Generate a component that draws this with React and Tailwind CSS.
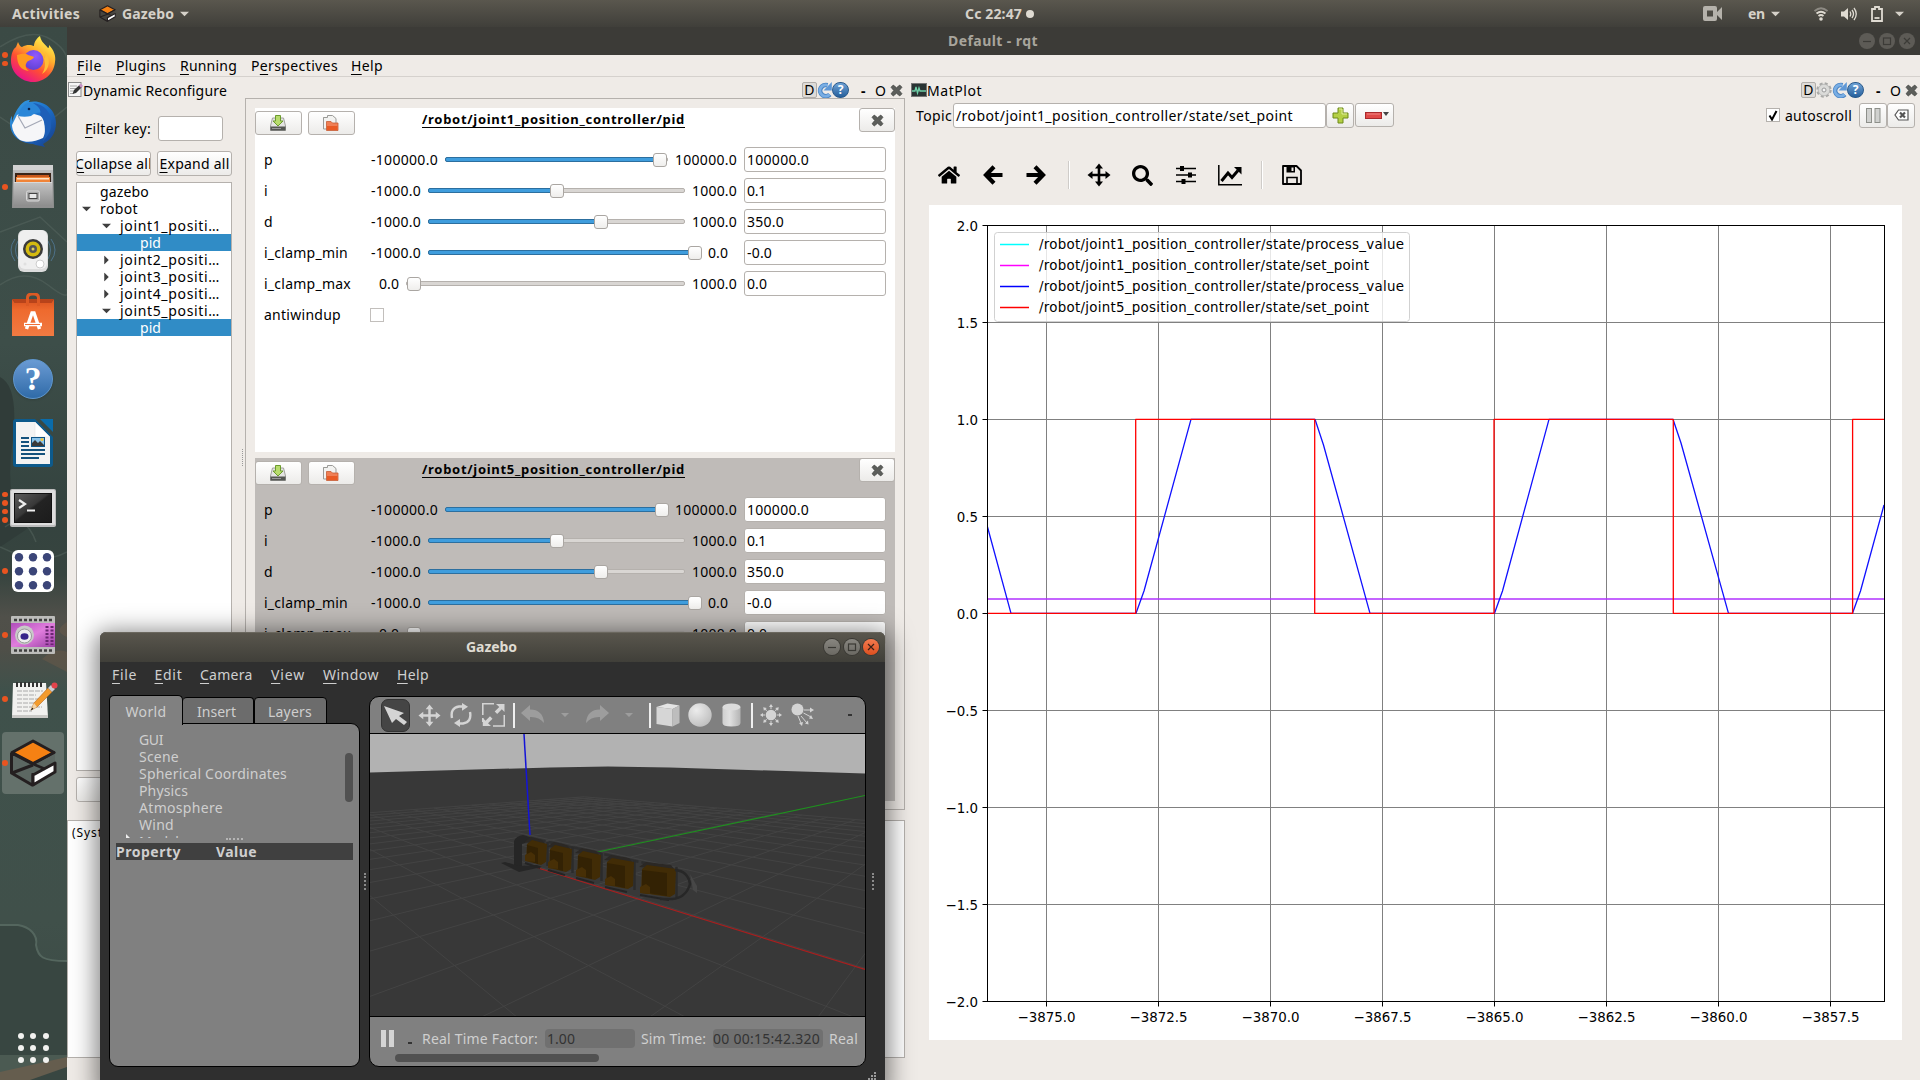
import React, { useLayoutEffect, useRef } from "react";
import { FaHome, FaSearch } from "react-icons/fa";

/* Text run tracked so that it fills a known width */
function T({ w, className = "", children }) {
  const ref = useRef(null);
  useLayoutEffect(() => {
    const el = ref.current;
    if (!w) return;
    el.style.letterSpacing = "0px";
    const natural = el.getBoundingClientRect().width;
    el.style.letterSpacing = (w - natural) / el.textContent.length + "px";
  }, [w]);
  return (
    <span ref={ref} className={"inline-block shrink-0 whitespace-pre " + className}>
      {children}
    </span>
  );
}

const U = ({ children }) => <span className="underline underline-offset-[3px] decoration-1">{children}</span>;

/* ---------- dock icons ---------- */
const Firefox = () => (
  <svg width="46" height="48" viewBox="0 0 46 48">
    <defs>
      <linearGradient id="ffA" x1="0.8" y1="0.05" x2="0.25" y2="0.95">
        <stop offset="0" stopColor="#fff44f" /><stop offset="0.35" stopColor="#ffb02e" /><stop offset="0.65" stopColor="#ff4f32" /><stop offset="1" stopColor="#e9128b" />
      </linearGradient>
      <radialGradient id="ffB" cx="0.6" cy="0.3" r="0.8">
        <stop offset="0" stopColor="#9059ff" /><stop offset="1" stopColor="#5b3fd0" />
      </radialGradient>
    </defs>
    <path d="M1 26C1 19 3 14 6 12l2-5c1 3 3 5 4 5 5-3 9-2 12-1 0-4 3-8 6-10 1 6 5 8 8 12 1 0 1-1 1-3 5 5 7 11 6 17-1 12-11 20-22 20S1 38 1 26z" fill="url(#ffA)" />
    <circle cx="23.500" cy="25" r="10" fill="url(#ffB)" />
    <path d="M7 20c5-1 8-2 11 0 2 1 5 1 6 2-1 3-5 3-7 5-2 3-2 6 2 9-8-1-12-6-12-16z" fill="#ff9a1f" />
    <path d="M25 12c5 1 9 6 9 12 2-2 2-5 1-8 6 8 5 18-3 23 6-9 3-20-7-27z" fill="#ffbd35" />
  </svg>
);
const Thunderbird = () => (
  <svg width="48" height="48" viewBox="0 0 48 48">
    <defs><linearGradient id="tb" x1="0" y1="0" x2="1" y2="1"><stop offset="0" stopColor="#3ba4e8" /><stop offset="0.5" stopColor="#1c6fc9" /><stop offset="1" stopColor="#163a86" /></linearGradient></defs>
    <path d="M10 8C14 2 18 1 21 1c0 0-1 1-1 2 14-3 27 7 27 21 0 10-5 17-13 21l2 3c-6-2-8-1-12-3C10 44 1 36 1 24c0-4 1-6 2-7l0 6c2-7 4-11 7-15z" fill="url(#tb)" />
    <path d="M3 26l5-10c8-4 19-1 26 2 2 9 3 16 0 21-8 4-17 5-23 2-4-3-8-9-8-15z" fill="#f6f6f8" />
    <path d="M9 17l7 12 17-8" stroke="#a4a8b6" strokeWidth="1.200" fill="none" />
    <path d="M9 17C12 6 19 2 24 4c8 1 12 7 12 11-5-3-10-1-14 2-4 1-9 1-13 0z" fill="#2a86d8" />
    <path d="M24 4c11 1 20 10 18 23 0 6-4 11-8 15 4-10 3-20-3-26 2-5-2-9-7-12z" fill="#1e5fb8" />
    <circle cx="20" cy="10" r="1.300" fill="#0c2450" />
  </svg>
);
const Files = () => (
  <svg width="42" height="44" viewBox="0 0 42 44">
    <defs><linearGradient id="fl" x1="0" y1="0" x2="0" y2="1"><stop offset="0" stopColor="#c4c4c4" /><stop offset="1" stopColor="#8d8d8d" /></linearGradient></defs>
    <path d="M1 2Q1 0 3 0H39Q41 0 41 2L42 43H0z" fill="url(#fl)" />
    <rect x="1" y="0" width="40" height="5" fill="#d2d2d2" />
    <rect x="3" y="8" width="36" height="9" fill="#3a2417" />
    <path d="M5 10H37V17H5z" fill="#c8581b" /><path d="M4 12H38V17H4z" fill="#f08438" /><rect x="5" y="13" width="32" height="1.500" fill="#ffe2c4" />
    <path d="M2 17H40V41H2z" fill="url(#fl)" /><path d="M2 17H40V18H2z" fill="#d9d9d9" />
    <rect x="14.500" y="26" width="13" height="10" rx="1.500" fill="#aaa" stroke="#d8d8d8" />
    <rect x="17" y="28.500" width="8" height="5" fill="#e8e8e8" stroke="#444" />
  </svg>
);
const Rhythmbox = () => (
  <svg width="48" height="44" viewBox="0 0 48 44">
    <g fill="none" stroke="#5c8fc0" strokeOpacity=".55"><path d="M6 10Q-2 21 6 32M42 10Q50 21 42 32M9 12Q4 21 9 30M39 12Q44 21 39 30" /></g>
    <rect x="9" y="1" width="30" height="42" rx="6" fill="#dcdcdc" /><rect x="10" y="1" width="28" height="39" rx="6" fill="#efefef" />
    <circle cx="24" cy="20" r="10" fill="#3a3a3a" /><circle cx="24" cy="20" r="7.500" fill="#d4ba10" />
    <circle cx="24" cy="20" r="4" fill="#555" /><circle cx="24" cy="20" r="1.500" fill="#e0d060" />
    <circle cx="31" cy="35" r="4" fill="#fff" stroke="#ccc" /><circle cx="16" cy="35" r="1.500" fill="#e0e0e0" />
  </svg>
);
const Software = () => (
  <svg width="42" height="44" viewBox="0 0 42 44">
    <defs><linearGradient id="sw" x1="0" y1="0" x2="0" y2="1"><stop offset="0" stopColor="#d8521f" /><stop offset="0.3" stopColor="#ee6a2e" /><stop offset="1" stopColor="#f17a42" /></linearGradient></defs>
    <path d="M0 6l3 4h36l3-4v37H0z" fill="url(#sw)" /><path d="M0 6H42L39 10H3z" fill="#b8431a" />
    <path d="M15.500 13V5Q15.500 1 20 1h2Q26.500 1 26.500 5v8" fill="none" stroke="#dd5a24" strokeWidth="3" />
    <path d="M14.500 36L20 20h2l5.500 16M12 31.500H30" stroke="#fff" strokeWidth="3.400" fill="none" /><path d="M13 31.500H28" stroke="#ef7038" strokeWidth="1" />
  </svg>
);
const Help = () => (
  <div className="flex size-10 items-center justify-center rounded-full border border-[#5f97cf] bg-linear-to-b from-[#6a9bd4] to-[#2f6ba8] text-[34px] leading-none text-white shadow">
    <span className="font-['Liberation_Serif',serif] font-bold">?</span>
  </div>
);
const Writer = () => (
  <svg width="40" height="48" viewBox="0 0 40 48">
    <path d="M3 0H22L40 18V45Q40 48 37 48H3Q0 48 0 45V3Q0 0 3 0z" fill="#0d5a8c" /><path d="M27 0H40V13z" fill="#0a6cab" />
    <path d="M3 3H22L37 18V45H3z" fill="#f3f3f3" /><path d="M22 3V18H37z" fill="#fff" stroke="#ddd" strokeWidth=".5" />
    <path d="M8 19H16M8 23H16M8 27H16M8 31H32M8 35H32M8 39H26" stroke="#14527d" strokeWidth="2" />
    <rect x="18" y="18" width="14" height="10" fill="#0e5486" /><rect x="19" y="19" width="12" height="8" fill="#8cc4ea" /><path d="M19 27v-3l3-3 3 3 2-2 4 4v1z" fill="#3a3a3a" /><circle cx="29" cy="20.500" r="1.500" fill="#f3c63a" />
  </svg>
);
const TerminalIcon = () => (
  <svg width="46" height="38" viewBox="0 0 46 38" className="translate-y-[1px]">
    <defs><linearGradient id="tm" x1="0" y1="0" x2="1" y2="1"><stop offset="0" stopColor="#5a5a5a" /><stop offset="0.45" stopColor="#383838" /><stop offset="0.5" stopColor="#232323" /><stop offset="1" stopColor="#1c1c1c" /></linearGradient></defs>
    <rect width="46" height="38" rx="2" fill="#bdbdbd" /><rect x="1" y="1" width="44" height="35" rx="1.500" fill="#dedede" />
    <rect x="4" y="4" width="38" height="30" fill="#111" /><rect x="5" y="5" width="36" height="28" fill="url(#tm)" />
    <path d="M9 11l6 4-6 4" fill="none" stroke="#eee" strokeWidth="2.200" /><path d="M17 21.500h8" stroke="#eee" strokeWidth="2" />
  </svg>
);
const DotsApp = () => (
  <svg width="42" height="42" viewBox="0 0 42 42">
    <rect width="42" height="42" rx="6" fill="#fff" />
    {[7, 21, 35].map((x) => [7, 21, 35].map((y) => <circle key={x + "-" + y} cx={x} cy={y + 0.3} r="4.200" fill="#3b4578" />))}
  </svg>
);
const Recorder = () => (
  <svg width="44" height="38" viewBox="0 0 44 38">
    <defs><linearGradient id="rc" x1="0" y1="0" x2="1" y2="1"><stop offset="0" stopColor="#b04dba" /><stop offset="0.5" stopColor="#e07ddd" /><stop offset="1" stopColor="#9b3fa5" /></linearGradient></defs>
    <rect width="44" height="38" rx="1" fill="#bcbcba" /><rect y="7" width="44" height="24" fill="url(#rc)" />
    <path d="M3 4H42M3 34.500H42" stroke="#3f3f3f" strokeWidth="2.500" strokeDasharray="3 2" />
    <circle cx="13.500" cy="19" r="9.500" fill="#c9c9c9" /><circle cx="13.500" cy="20" r="7" fill="#eee" stroke="#999" /><ellipse cx="13.500" cy="20.500" rx="4" ry="3.200" fill="#37248a" />
    <path d="M36 10V29M41 10V29" stroke="#6b2673" strokeWidth="3" strokeDasharray="2 1.500" />
  </svg>
);
const Notes = () => (
  <svg width="48" height="38" viewBox="0 0 48 38" className="translate-x-[1px]">
    <path d="M3 3H36L38 37H2z" fill="#f1f1ef" /><path d="M2 35H38V38H2z" fill="#c9c9c6" />
    <path d="M7 11H33M7 15H26M7 19H32M7 23H24M7 27H32M7 31H22" stroke="#aaa" strokeWidth="1" strokeDasharray="5 1" />
    <path d="M7 7V2M11 7V2M15 7V2M19 7V2M23 7V2M27 7V2M31 7V2" stroke="#333" strokeWidth="2" />
    <path d="M21 30l3-7L38 8l4 4L27 27z" fill="#f39b2d" stroke="#b5651a" strokeWidth=".6" /><path d="M21 30l3-7 3 4z" fill="#f3d3a5" /><path d="M20.500 30.500l2-3 1 1.500z" fill="#222" />
    <path d="M38 8l3-3 4 4-3 3z" fill="#c9ccd2" /><circle cx="44.500" cy="5.500" r="3" fill="#e2434b" />
  </svg>
);
const GazeboLogo = ({ size }) => (
  <svg width={size} height={size} viewBox="0 0 48 48">
    <path d="M24 2L46 13V32L24 46 2 34V14z" fill="#26201f" fillOpacity=".12" />
    <path d="M24 2L45 13.500 24 24.500 3 13.500z" fill="#f58113" stroke="#241f20" strokeWidth="3" strokeLinejoin="round" />
    <path d="M2.500 14V34L24 46.500M2.500 14L24 25V26M24 26L3 34M24 34V46.500" fill="none" stroke="#241f20" strokeWidth="3" strokeLinejoin="round" />
    <path d="M24 36L46 24V33L24 46z" fill="#fff" stroke="#241f20" strokeWidth="3" strokeLinejoin="round" />
    <path d="M24 25L36 30M46 13L24 25" fill="none" stroke="#241f20" strokeWidth="2.500" />
  </svg>
);

const DOCK = [
  { icon: <Firefox />, dots: 2 },
  { icon: <Thunderbird />, dots: 0 },
  { icon: <Files />, dots: 1 },
  { icon: <Rhythmbox />, dots: 0 },
  { icon: <Software />, dots: 0 },
  { icon: <Help />, dots: 0 },
  { icon: <Writer />, dots: 0 },
  { icon: <TerminalIcon />, dots: 4 },
  { icon: <DotsApp />, dots: 1 },
  { icon: <Recorder />, dots: 1 },
  { icon: <Notes />, dots: 1 },
  { icon: <GazeboLogo size={48} />, dots: 1, active: true },
];

function Dock() {
  return (
    <div className="relative flex h-full w-[67px] shrink-0 flex-col overflow-hidden bg-[#40504a]">
      <svg className="absolute inset-0" width="67" height="1053" viewBox="0 0 67 1053">
        <defs>
          <linearGradient id="wall" x1="0" y1="0" x2="0" y2="1">
            <stop offset="0" stopColor="#3b4a45" /><stop offset="0.3" stopColor="#3d4e49" /><stop offset="0.46" stopColor="#34433f" />
            <stop offset="0.52" stopColor="#37443f" /><stop offset="0.56" stopColor="#50504a" /><stop offset="0.59" stopColor="#4f4f48" /><stop offset="0.63" stopColor="#3f514b" /><stop offset="0.85" stopColor="#40504a" /><stop offset="1" stopColor="#3a4843" />
          </linearGradient>
        </defs>
        <rect width="67" height="1053" fill="url(#wall)" />
        <path d="M0 350Q20 360 12 420T30 500L0 520z" fill="#303c39" />
        <path d="M0 20Q30 0 50 12T67 40M0 258Q25 240 48 258T67 262M0 205L40 190 67 215M5 500Q25 485 36 515M0 520Q40 540 67 525M0 90L30 110 67 80" fill="none" stroke="#5a6b63" strokeOpacity=".45" strokeWidth="1.500" />
        <path d="M42 632Q55 620 67 625V610Q52 604 67 595V645Z" fill="#66594a" fillOpacity=".6" />
        <path d="M0 898H18C30 900 38 908 36 918C38 930 42 934 67 934V1053H0z" fill="#384641" />
        <path d="M0 898H18C30 900 38 908 36 918C38 930 42 934 67 934" fill="none" stroke="#54665e" strokeWidth="2" />
        <path d="M0 1028H67V1036L0 1053z" fill="#4b5a52" /><path d="M0 1045L67 1030V1040L30 1053H0z" fill="#655d4e" />
      </svg>
      {DOCK.map((d, k) => (
        <div key={k} className="relative flex h-16 w-full shrink-0 items-center">
          <div className="flex w-[2px] shrink-0 flex-col items-start gap-[3px]">
            {Array.from({ length: d.dots }, (_, n) => (
              <span key={n} className="z-10 ml-[2px] size-[5.500px] shrink-0 rounded-full bg-[#e95420]" />
            ))}
          </div>
          <div className={"flex h-[62px] w-[62px] items-center justify-center rounded " + (d.active ? "bg-[#64716b]" : "")}>{d.icon}</div>
        </div>
      ))}
      <div className="relative mt-auto mb-[17px] ml-[18px] grid w-[31px] grid-cols-3 gap-x-[6px] gap-y-[6px]">
        {Array.from({ length: 9 }, (_, n) => <span key={n} className="size-[6px] rounded-full bg-[#f2f2f0]" />)}
      </div>
    </div>
  );
}

/* ---------- small shared glyphs ---------- */
const Caret = ({ className = "" }) => (
  <svg className={className} width="10" height="6" viewBox="0 0 10 6"><path d="M0 .5H10L5 5.500z" fill="currentColor" /></svg>
);
const Cross = ({ s = 12 }) => (
  <svg className="shrink-0" width={s} height={s} viewBox="0 0 12 12"><path d="M1 3l2-2 3 2.500L9 1l2 2-2.500 3L11 9l-2 2-3-2.500L3 11 1 9l2.500-3z" fill="#5c5e5b" stroke="#474947" strokeWidth=".8" /></svg>
);
const Refresh = () => (
  <svg className="shrink-0" width="15" height="16" viewBox="0 0 15 16">
    <path d="M12.800 12.500A5.600 5.600 0 1 1 10.500 3.300" fill="none" stroke="#4d86c4" strokeWidth="4.600" /><path d="M12.500 12.500A5.600 5.600 0 1 1 10.500 3.300" fill="none" stroke="#79aee4" strokeWidth="2.800" /><path d="M14.800 0V8.500H6.500z" fill="#5f98d6" />
  </svg>
);
const HelpSmall = () => (
  <span className="flex h-4 w-[17px] shrink-0 items-center justify-center rounded-full border border-[#2a5a8c] bg-linear-to-b from-[#6fa3d6] to-[#255f9b] text-[12px] leading-none font-bold text-white">?</span>
);
const Gear = () => (
  <svg className="shrink-0" width="16" height="16" viewBox="0 0 16 16"><circle cx="8" cy="8" r="6.500" fill="#d9d9d7" stroke="#a9a9a7" strokeWidth="2.400" strokeDasharray="2.900 2.200" /><circle cx="8" cy="8" r="5.700" fill="#dbdbd9" stroke="#b5b5b3" strokeWidth=".7" /><circle cx="8" cy="8" r="2" fill="#f4f4f4" stroke="#999" /></svg>
);
const DButton = () => (
  <span className="flex h-4 w-[15.500px] shrink-0 items-center justify-center rounded-[2px] border border-[#b1aeaa] bg-[#dedbd8] text-[14px] leading-none">D</span>
);
function DockControls({ gear }) {
  return (
    <div className="ml-auto flex h-4 items-center">
      <DButton />
      {gear && <Gear />}
      <Refresh />
      <HelpSmall />
      <span className="ml-[12px] w-[14px] font-bold">-</span>
      <span className="w-[15px]">O</span>
      <Cross s={13} />
    </div>
  );
}
const BTN = "flex shrink-0 items-center justify-center rounded-[3px] border border-[#b5b1ad] bg-linear-to-b from-white to-[#ecebe9]";
const FIELD = "flex shrink-0 items-center rounded-[3px] border border-[#b5b1ad] bg-white";

/* ---------- dynamic reconfigure ---------- */
const SaveIcon = () => (
  <svg className="-translate-x-[1px]" width="16" height="17" viewBox="0 0 16 17">
    <path d="M2.500 3h11L15.500 11v4.500H.5V11z" fill="#e4e4e2" stroke="#a0a09d" /><path d="M.5 11.500h15v4H.5z" fill="#555753" /><path d="M2 13.500h9" stroke="#999" />
    <path d="M5.500 .5h5V6H13L8 11 3 6h2.500z" fill="#b7dc6c" stroke="#6c9b2d" />
  </svg>
);
const OpenIcon = () => (
  <svg className="-translate-x-[1px]" width="17" height="17" viewBox="0 0 17 17">
    <path d="M1.500 13V2.500h4V.5h5l3.500 3V8" fill="#f2f2f0" stroke="#9a9a97" /><path d="M1.500 2.500V14h4" fill="#f2f2f0" stroke="#9a9a97" />
    <path d="M4.500 15.500V6.500h4.500l1.500 1.500h5.500v7.500z" fill="#f07f55" stroke="#c75c33" strokeWidth=".8" /><path d="M5 11h10.500v4H5z" fill="#e95a24" />
  </svg>
);

const ROWS = [
  { name: "p", nw: 8, min: "-100000.0", mw: 67, lead: "w-[74px]", fill: 214, max: "100000.0", xw: 62, trail: "w-[76px] pl-[7px]", value: "100000.0", vw: 62 },
  { name: "i", nw: 3, min: "-1000.0", mw: 50, lead: "w-[57px]", fill: 128, max: "1000.0", xw: 45, trail: "w-[59px] pl-[7px]", value: "0.1", vw: 19 },
  { name: "d", nw: 8, min: "-1000.0", mw: 50, lead: "w-[57px]", fill: 172, max: "1000.0", xw: 45, trail: "w-[59px] pl-[7px]", value: "350.0", vw: 37 },
  { name: "i_clamp_min", nw: 84, min: "-1000.0", mw: 50, lead: "w-[57px]", fill: 266, max: "0.0", xw: 20, trail: "w-[43px] pl-[7px]", value: "-0.0", vw: 25 },
  { name: "i_clamp_max", nw: 87, min: "0.0", mw: 20, lead: "w-[35px] pl-2", fill: 7, max: "1000.0", xw: 45, trail: "w-[59px] pl-[7px]", value: "0.0", vw: 20 },
];

function Slider({ fill }) {
  return (
    <div className="relative h-[5px] flex-1 rounded-[2px] border border-[#b5b1ad] bg-[#d9d6d3]">
      {fill > 7 && <div className="absolute -top-px -left-px h-[5px] rounded-[2px] border border-[#2c6f9f] bg-[#3f9ddd]" style={{ width: fill }} />}
      <div className="absolute -top-[5.500px] h-[14px] w-[14px] rounded-[3px] border border-[#aaa6a2] bg-linear-to-b from-white to-[#efeeec]" style={{ left: fill - 7.5 }} />
    </div>
  );
}

function ParamPanel({ title, tint, full, pFill }) {
  return (
    <div className={"flex w-[640px] flex-col overflow-hidden " + (tint ? "h-[343px] bg-[#bfbbb8]" : "h-[344px] bg-white")}>
      <div className="flex h-9 shrink-0 items-start">
        <div className={BTN + " mt-[3px] h-6 w-[47px]"}><SaveIcon /></div>
        <div className={BTN + " mt-[3px] ml-[6px] h-6 w-[47px]"}><OpenIcon /></div>
        <div className="flex h-6 flex-1 items-center pt-px pl-[67px] text-[13px] leading-none font-bold">
          <T w={263} className="border-b border-black pb-px">{title}</T>
        </div>
        <div className={BTN + " mt-0 h-6 w-9"}><Cross s={13} /></div>
      </div>
      {ROWS.map((r) => (
        <div key={r.name} className="flex h-[31px] shrink-0 items-center pr-[9px] pl-[9px]">
          <div className="w-[107px] shrink-0"><T w={r.nw}>{r.name}</T></div>
          <div className={"shrink-0 " + r.lead}><T w={r.mw}>{r.min}</T></div>
          <Slider fill={r.name === "p" ? pFill : r.fill} />
          <div className={"shrink-0 " + r.trail}><T w={r.xw}>{r.max}</T></div>
          <div className={FIELD + " h-[25px] w-[142px] pl-[2px]" + (tint ? " border-[#918e8b]" : "")}><T w={r.vw}>{r.value}</T></div>
        </div>
      ))}
      {full && (
        <div className="flex h-[31px] shrink-0 items-center pl-[9px]">
          <div className="w-[106px] shrink-0"><T w={77}>antiwindup</T></div>
          <div className="size-[14px] border border-[#c2bfbc] bg-white" />
        </div>
      )}
    </div>
  );
}

const TREE = [
  { t: "gazebo", w: 49, pad: "pl-[23px]" },
  { t: "robot", w: 38, pad: "pl-[5px]", open: true },
  { t: "joint1_positi…", w: 100, pad: "pl-[25px]", open: true },
  { t: "pid", w: 21, pad: "pl-[63px]", sel: true },
  { t: "joint2_positi…", w: 100, pad: "pl-[25px]", closed: true },
  { t: "joint3_positi…", w: 100, pad: "pl-[25px]", closed: true },
  { t: "joint4_positi…", w: 100, pad: "pl-[25px]", closed: true },
  { t: "joint5_positi…", w: 100, pad: "pl-[25px]", open: true },
  { t: "pid", w: 21, pad: "pl-[63px]", sel: true },
];

function Reconfigure() {
  return (
    <div className="flex w-[838px] shrink-0 flex-col">
      <div className="mt-[5px] flex h-4 items-center pr-[2px] pl-px">
        <svg width="15" height="16" viewBox="0 0 15 16">
          <rect x=".5" y=".5" width="12.500" height="14" fill="#f6f6f6" stroke="#8b8b8b" /><path d="M2 4h7M2 6.500h6M2 9h4M2 11.500h4" stroke="#aaa" />
          <path d="M4.500 12l1.500-4 6-5.500 2 2.500L8 11z" fill="#333" /><path d="M11 3.500l2-2 2 2.500-2 2z" fill="#c690c4" />
        </svg>
        <T w={144}>Dynamic Reconfigure</T>
        <DockControls />
      </div>
      <div className="flex h-[712px]">
        <div className="flex w-[178px] shrink-0 flex-col pl-[9px]">
          <div className="mt-[18px] flex h-[25px] items-center pl-[9px]">
            <T w={66} className="mr-[7px]"><U>F</U>ilter key:</T>
            <div className={FIELD + " h-[25px] w-[65px]"} />
          </div>
          <div className="mt-[10px] flex gap-[6px]">
            <div className={BTN + " h-[25px] w-[75px] overflow-hidden"}><T w={77}><U>C</U>ollapse all</T></div>
            <div className={BTN + " h-[25px] w-[75px] overflow-hidden"}><T w={70}><U>E</U>xpand all</T></div>
          </div>
          <div className="mt-[6px] h-[589px] w-[156px] border border-[#b5b1ad] bg-white">
            {TREE.map((n, k) => (
              <div key={k} className={"flex h-[17px] items-center " + n.pad + (n.sel ? " bg-[#308cc6] text-white" : "")}>
                {n.open && <Caret className="mr-[9px] w-[9px] text-[#3f3f3f]" />}
                {n.closed && <Caret className="mr-[9px] w-[9px] -rotate-90 text-[#3f3f3f]" />}
                <T w={n.w}>{n.t}</T>
              </div>
            ))}
          </div>
          <div className={BTN + " mt-[6px] h-[25px] w-[156px]"} />
        </div>
        <div className="relative flex w-[660px] shrink-0 flex-col gap-[6px] border border-[#b5b1ad] pt-[9px] pl-[9px]">
          <div className="absolute top-[350px] -left-[4px] h-[17px] border-l border-dotted border-[#999]" />
          <ParamPanel title="/robot/joint1_position_controller/pid" full pFill={214} />
          <ParamPanel title="/robot/joint5_position_controller/pid" tint pFill={216} />
        </div>
      </div>
      <div className="mt-[10px] h-[238px] w-[838px] border border-[#b5b1ad] bg-white pt-[4px] pl-[4px] text-[12px] leading-[15px]">
        <T w={31}>(Syst</T>
      </div>
    </div>
  );
}

/* ---------- plot ---------- */
const XT = [-3875, -3872.5, -3870, -3867.5, -3865, -3862.5, -3860, -3857.5];
const YT = [2, 1.5, 1, 0.5, 0, -0.5, -1, -1.5, -2];
const px = (v) => 117.5 + (v + 3875) * 44.8;
const py = (v) => 408.5 - v * 194;
const fmt = (v) => (v < 0 ? "−" : "") + Math.abs(v).toFixed(1);
const LEGEND = [
  ["#00ffff", "/robot/joint1_position_controller/state/process_value", 365],
  ["#ff00ff", "/robot/joint1_position_controller/state/set_point", 330],
  ["#0000ff", "/robot/joint5_position_controller/state/process_value", 365],
  ["#ff0000", "/robot/joint5_position_controller/state/set_point", 330],
];

function Plot() {
  return (
    <svg width="973" height="835" viewBox="0 0 973 835" className="block bg-white" fontFamily="'DejaVu Sans', sans-serif" fontSize="13.4">
      <g stroke="#808080" strokeWidth="1">
        {XT.map((v) => <path key={v} d={`M${px(v)} 20V796`} />)}
        {YT.map((v) => <path key={v} d={`M58 ${py(v)}H955`} />)}
      </g>
      <g fill="none" strokeWidth="1.500" strokeLinejoin="round">
        <path d="M58.500 394H955.500" stroke="#b030ff" />
        <path d="M58.500 322L82 408.300H207L215 386 262 214.300H386L394.500 240 441 408.300H565.500L573.500 386 620 214.300H744L752 238 799.500 408.300H923.500L931.500 386 955 300" stroke="#1010ff" strokeWidth="1.300" />
        <path d="M58.500 408.300H206.700V214.300H385.700V408.300H565V214.300H744.300V408.300H923.600V214.300H955.500" stroke="#ff0000" strokeWidth="1.300" />
      </g>
      <rect x="58.500" y="20.500" width="897" height="776" fill="none" stroke="#000" />
      <g stroke="#000">
        {XT.map((v) => <path key={v} d={`M${px(v)} 797V801.500`} />)}
        {YT.map((v) => <path key={v} d={`M53.500 ${py(v)}H58`} />)}
      </g>
      {XT.map((v) => <text key={v} x={px(v)} y="816.500" textAnchor="middle">{fmt(v)}</text>)}
      {YT.map((v) => <text key={v} x="49" y={py(v) + 5} textAnchor="end">{fmt(v)}</text>)}
      <rect x="65.500" y="27.500" width="415" height="89" rx="3" fill="#fff" fillOpacity=".8" stroke="#ccc" strokeOpacity=".9" />
      {LEGEND.map(([c, t, w], k) => (
        <g key={t}>
          <path d={`M71 ${39.500 + k * 21}H100`} stroke={c} strokeWidth="1.500" />
          <text x="110" y={44.300 + k * 21} textLength={w}>{t}</text>
        </g>
      ))}
    </svg>
  );
}

const MoveIcon = ({ size = 24, color = "#000" }) => (
  <svg className="shrink-0" width={size} height={size} viewBox="0 0 24 24"><path d="M12 .5l4 5h-2.700v5.200h5.200V8l5 4-5 4v-2.700h-5.200v5.200H16l-4 5-4-5h2.700v-5.200H5.500V16l-5-4 5-4v2.700h5.200V5.500H8z" fill={color} /></svg>
);
const BoldArrow = ({ className = "" }) => (
  <svg className={className} width="20" height="20" viewBox="0 0 20 20"><path d="M11 1.800L3 10l8 8.200M3.500 10H19.500" fill="none" stroke="#000" strokeWidth="4.200" /></svg>
);

function MatPlot() {
  return (
    <div className="flex flex-1 flex-col pl-[6px]">
      <div className="mt-[5px] flex h-4 items-center pr-[2px]">
        <svg width="16" height="14" viewBox="0 0 16 14"><rect x=".5" y=".5" width="15" height="13" fill="#2a3434" stroke="#777" /><path d="M1 8h3l1-4 1.500 6L8 5l1 3h6" fill="none" stroke="#6fd0a8" strokeWidth="1.300" /></svg>
        <T w={55}>MatPlot</T>
        <DockControls gear />
      </div>
      <div className="mt-[4px] flex h-[26px] items-center pl-[5px]">
        <T w={36}>Topic</T>
        <div className={FIELD + " ml-px h-[25px] w-[373px] pl-[2px]"}><T w={337}>/robot/joint1_position_controller/state/set_point</T></div>
        <div className={BTN + " h-[25px] w-[28px]"}>
          <svg width="17" height="17" viewBox="0 0 17 17"><path d="M6 1h5v5h5v5h-5v5H6v-5H1V6h5z" fill="#b4cf45" stroke="#6d8a18" /><path d="M7 2h3v5h5" fill="none" stroke="#dfee9a" /></svg>
        </div>
        <div className={BTN + " ml-px h-6 w-[39px] pl-[5px]"}>
          <svg width="17" height="7" viewBox="0 0 17 7"><rect x=".5" y=".5" width="16" height="6" fill="#e04a48" stroke="#a92a2c" /><path d="M2 2h13" stroke="#f08785" /></svg>
          <svg className="mb-[2px] ml-px" width="6" height="4" viewBox="0 0 6 4"><path d="M0 0H6L3 4z" fill="#444" /></svg>
        </div>
        <div className="ml-auto flex size-[14px] items-center justify-center border border-[#b5b1ad] bg-white">
          <svg width="10" height="11" viewBox="0 0 10 11"><path d="M1.500 5.500l2.500 4L8.500 1" fill="none" stroke="#000" strokeWidth="2" /></svg>
        </div>
        <T w={67} className="ml-[5px]">autoscroll</T>
        <div className={BTN + " ml-[7px] h-[25px] w-[28px]"}>
          <svg width="15" height="15" viewBox="0 0 15 15"><rect x=".5" y=".5" width="5" height="14" fill="#d0d1cf" stroke="#8d8f8a" /><rect x="9" y=".5" width="5" height="14" fill="#d0d1cf" stroke="#8d8f8a" /></svg>
        </div>
        <div className={BTN + " mr-[5px] h-[25px] w-[28px]"}>
          <svg width="15" height="12" viewBox="0 0 15 12"><path d="M4.500 1H14v10H4.500L1 6z" fill="#fff" stroke="#555" strokeWidth="1.200" /><path d="M6 3.500l5 5M11 3.500l-5 5" stroke="#555" strokeWidth="2.200" /></svg>
        </div>
      </div>
      <div className="mt-[33px] flex h-7 items-center pl-[27px]">
        <FaHome size={22} />
        <BoldArrow className="ml-[23px]" />
        <BoldArrow className="ml-[23px] rotate-180" />
        <div className="mr-[17px] ml-[22px] h-7 w-[2px] border-l border-[#cfccc9] bg-white" />
        <MoveIcon />
        <FaSearch size={21} className="ml-[21px]" />
        <svg className="ml-[23px]" width="20" height="20" viewBox="0 0 20 20"><path d="M0 3.500H20M0 10H20M0 16.500H20" stroke="#000" strokeWidth="1.500" /><path d="M4 1h4v5H4zM12 7.500h4v5h-4zM5.500 14h4v5h-4z" fill="#000" /></svg>
        <svg className="ml-[22px]" width="24" height="21" viewBox="0 0 24 21"><path d="M.8 0V19.800H24" fill="none" stroke="#000" strokeWidth="1.500" /><path d="M3.500 16L10 8l4 4.500L20 5.500" fill="none" stroke="#000" strokeWidth="3" /><path d="M16 2h7.500v7.500z" fill="#000" /></svg>
        <div className="mr-[19px] ml-[19px] h-7 w-[2px] border-l border-[#cfccc9] bg-white" />
        <svg width="20" height="20" viewBox="0 0 20 20"><path d="M1 1H14.500L19 5.500V19H1z" fill="none" stroke="#000" strokeWidth="1.800" strokeLinejoin="round" /><path d="M4.500 1h8.500v6.500H4.500z" fill="#000" /><path d="M9.500 2.500h2v3.500h-2z" fill="#efebe7" /><path d="M5 19v-6.500h10V19" fill="none" stroke="#000" strokeWidth="1.600" /></svg>
      </div>
      <div className="mt-[16px] ml-[18px]"><Plot /></div>
    </div>
  );
}

/* ---------- gazebo window ---------- */
/* Ground grid: two line families meeting in two vanishing points on the horizon */
function gridLines() {
  const G = [1803, 440];
  const R = [-413, 440];
  const N = 13;
  const at = (i, j) => {
    const a = [-861 - 375 * i, 1040];
    const b = [1390 + 375 * j, 1040];
    const u = [a[0] - G[0], 600];
    const v = [b[0] - R[0], 600];
    const det = u[0] * -v[1] + v[0] * u[1];
    const t = ((R[0] - G[0]) * -v[1]) / det;
    return [G[0] + t * u[0], 440 + t * 600];
  };
  const out = [];
  const push = (p, vp) => {
    const dx = p[0] - vp[0];
    const dy = p[1] - vp[1];
    const k = 1500 / dy;
    out.push([p[0], p[1], p[0] + dx * k, p[1] + dy * k]);
  };
  for (let j = N; j >= -4; j--) push(at(N, j), R);
  for (let i = N; i >= -6; i--) push(at(i, N), G);
  return out.map(([a, b, c, d]) => [a / 2.8 - 10, b / 3 - 115, c / 2.8 - 10, d / 3 - 115]);
}
const GRID = gridLines();
const BLOCKS = [
  [157, 110, 19, 20], [180, 115, 21, 22], [208, 121, 22, 24], [237, 128, 26, 26], [272, 135, 33, 27],
];

function Scene() {
  return (
    <svg width="495" height="282" viewBox="0 0 495 282" className="block shrink-0">
      <rect width="495" height="282" fill="#383838" />
      <path d="M0 0H495V39.500L300 33.500 238 32.500 180 33.500 0 38.500z" fill="#b2b2b2" />
      <g stroke="#434343" strokeWidth="1">
        {GRID.map((l, k) => <path key={k} d={`M${l[0].toFixed(1)} ${l[1].toFixed(1)}L${l[2].toFixed(1)} ${l[3].toFixed(1)}`} />)}
      </g>
      <path d="M223 119L495 61.500" stroke="#1f8f1f" strokeWidth="1.200" />
      <path d="M168 134L495 235.500" stroke="#a81f1f" strokeWidth="1.200" />
      <path d="M154 0L160 101" stroke="#1414d8" strokeWidth="1.500" />
      <path d="M144 132V107Q146 102 153 101L160 103V107L152 110V132z" fill="#262626" />
      <path d="M131 129l4-1 14 4 18-1 5 2-23 5z" fill="#262626" />
      <path d="M160 104L302 135" stroke="#2d2d2d" strokeWidth="2.500" fill="none" strokeDasharray="16 3" />
      {BLOCKS.map(([x, y, w, h], k) => (
        <g key={k}>
          <path d={`M${x - 3} ${y - 2}l7 -5 ${w - 8} 3 4 5z`} fill="#2b2825" />
          <path d={`M${x + w + 1.500} ${y - 2}v${h + 4}`} stroke="#2b2b2b" strokeWidth="2.500" />
          <path d={`M${x} ${y}l5 -4 ${w - 4} 4 -1 ${h - 2} -5 3 -${w - 4} -4z`} fill="#412c06" />
          <path d={`M${x} ${y + 1}l${w - 8} 3v${h - 4}l-${w - 8} -4z`} fill="#332204" />
          <path d={`M${x - 2} ${y + h - 9}l6 -3 4 3v7l-10 -1z`} fill="#472f06" />
          <path d={`M${x - 2} ${y + h - 1}l${w - 4} 5`} stroke="#242424" strokeWidth="2" />
        </g>
      ))}
      <path d="M305 136Q318 137 320 150Q316 164 302 165H290" fill="none" stroke="#272727" strokeWidth="2.500" />
      <path d="M320 140l7 12v7l-4 -3z" fill="#474747" />
    </svg>
  );
}

const WinBtn = ({ kind, cls, c }) => (
  <span className={"flex items-center justify-center rounded-full " + cls}>
    <svg width="16" height="16" viewBox="0 0 16 16" fill="none" stroke={c} strokeWidth="1.200">
      {kind === "min" && <path d="M4 8.500H12" />}
      {kind === "max" && <rect x="4.500" y="5" width="7" height="6.500" />}
      {kind === "close" && <path d="M5 5l6 6M11 5l-6 6" />}
    </svg>
  </span>
);

const L = "#d4d4d4";
function GazeboToolbar() {
  return (
    <div className="flex h-[37px] shrink-0 items-center border-b border-black pl-[11px]">
      <div className="flex h-[33px] w-[29px] shrink-0 items-center justify-center rounded-[7px] border border-[#333] bg-[#454545]">
        <svg width="25" height="20" viewBox="0 0 25 20"><path d="M1 1L21 8l-5 3 8 6-3 3-8-6-4 4z" fill={L} /></svg>
      </div>
      <div className="ml-[8px]"><MoveIcon size={23} color={L} /></div>
      <svg className="ml-[9px]" width="22" height="24" viewBox="0 0 22 24" fill="none" stroke={L} strokeWidth="2.400"><path d="M2 15Q0 5 9 3.500h4M20 9q2 10-7 11.500H9" /><path d="M12 0l6 3.800-6 4zM10 16l-6 4 6 4z" fill={L} stroke="none" /></svg>
      <svg className="ml-[10px]" width="23" height="24" viewBox="0 0 23 24"><path d="M12 .8H.8V12M.8 19V15M11 23H22.300V12" fill="none" stroke={L} strokeWidth="1.600" /><path d="M22.500 1v8l-2.700-2.700-4.600 4.700-2.500-2.500L17.300 4 14 1zM.8 23v-8l2.700 2.700 4.500-4.500 2.500 2.500L6 20.300 9 23z" fill={L} /></svg>
      <div className="ml-[8px] h-[25px] w-[2px] bg-[#efefef]" />
      <svg className="ml-[6px]" width="24" height="20" viewBox="0 0 24 20"><path d="M0 8L9 0v4.500q13 0 14 13.500Q18 11.500 9 12v4z" fill="#9d9d9d" /></svg>
      <Caret className="ml-[16px] w-[8px] text-[#9d9d9d]" />
      <svg className="ml-[16px]" width="24" height="20" viewBox="0 0 24 20"><path d="M24 8L15 0v4.500Q2 4.500 1 18 6 11.500 15 12v4z" fill="#9d9d9d" /></svg>
      <Caret className="ml-[16px] w-[8px] text-[#9d9d9d]" />
      <div className="ml-[16px] h-[25px] w-[2px] bg-[#efefef]" />
      <svg className="ml-[5px]" width="24" height="24" viewBox="0 0 24 24"><path d="M.5 4l11-3.500 12 2-7 3.500z" fill="#e4e4e4" /><path d="M.5 4l16 2v17.500L.5 21z" fill="#d6d6d6" /><path d="M16.500 6l7-3.500V20l-7 3.500z" fill="#bdbdbd" /></svg>
      <svg className="ml-[8px]" width="24" height="24" viewBox="0 0 24 24"><defs><radialGradient id="sp" cx=".35" cy=".3" r=".8"><stop offset="0" stopColor="#ececec" /><stop offset="1" stopColor="#bcbcbc" /></radialGradient></defs><circle cx="12" cy="12" r="11.700" fill="url(#sp)" /></svg>
      <svg className="ml-[10px]" width="19" height="24" viewBox="0 0 19 24"><defs><linearGradient id="cy"><stop offset="0" stopColor="#cfcfcf" /><stop offset=".4" stopColor="#e0e0e0" /><stop offset="1" stopColor="#b4b4b4" /></linearGradient></defs><path d="M.5 4v16q0 3.500 9 3.500t9-3.500V4z" fill="url(#cy)" /><ellipse cx="9.500" cy="4" rx="9" ry="3.500" fill="#dcdcdc" /></svg>
      <div className="ml-[10px] h-[25px] w-[2px] bg-[#efefef]" />
      <svg className="ml-[6px]" width="24" height="24" viewBox="0 0 24 24"><circle cx="12" cy="12" r="5.300" fill={L} />{[0, 45, 90, 135, 180, 225, 270, 315].map((a) => <path key={a} transform={`rotate(${a} 12 12)`} d="M12 1l2 3h-1.500V6h-1V4H10z" fill={L} />)}</svg>
      <svg className="ml-[8px]" width="24" height="24" viewBox="0 0 24 24"><circle cx="6.500" cy="6.500" r="6" fill={L} /><g stroke={L} strokeWidth="1"><path d="M13 7H20M12.500 10L20 14M10 13L16 20M7 13l3 7" /></g><path d="M19 4.500l4 2.500-4 2.500zM18 15.500l4 .5-2-4zM14 20.500l3.500 1-.5-4zM8 20l3 3 1-4z" fill={L} /></svg>
      <div className="ml-[33px] h-[2px] w-[4px] bg-[#333]" />
    </div>
  );
}

function Gazebo() {
  return (
    <div className="absolute top-[632px] left-[100px] flex h-[460px] w-[785px] flex-col overflow-visible rounded-t-[6px] bg-[#2f2f2f] text-[#cfcfcf] shadow-[0_4px_24px_4px_rgba(0,0,0,0.5)]">
      <div className="flex h-[30px] shrink-0 items-center rounded-t-[6px] border-t border-[#6a675e] bg-linear-to-b from-[#59564d] to-[#403f39] pb-[2px] text-[#dfdbd2]">
        <div className="w-[366px] shrink-0" />
        <T w={51} className="font-bold">Gazebo</T>
        <div className="mr-[6px] ml-auto flex gap-[3.500px]">
          <WinBtn kind="min" cls="size-[16px] bg-linear-to-b from-[#888680] to-[#6b6963] ring-1 ring-[#3a3934]" c="#3a3934" />
          <WinBtn kind="max" cls="size-[16px] bg-linear-to-b from-[#888680] to-[#6b6963] ring-1 ring-[#3a3934]" c="#3a3934" />
          <WinBtn kind="close" cls="size-[16px] bg-linear-to-b from-[#f47a4e] to-[#dd4f1d] ring-1 ring-[#3a3934]" c="#3a2018" />
        </div>
      </div>
      <div className="flex h-[26px] shrink-0 items-center pb-[2px] pl-[12px]">
        <T w={25} className="mr-[17.500px]"><U>F</U>ile</T>
        <T w={28} className="mr-[17.500px]"><U>E</U>dit</T>
        <T w={52.5} className="mr-[18.500px]"><U>C</U>amera</T>
        <T w={34} className="mr-[18px]"><U>V</U>iew</T>
        <T w={56} className="mr-[18px]"><U>W</U>indow</T>
        <T w={32}><U>H</U>elp</T>
      </div>
      <div className="mt-[8px] flex h-[371px] shrink-0 pl-[9px]">
        <div className="flex w-[251px] shrink-0 flex-col">
          <div className="flex h-[28px] shrink-0 items-end">
            <div className="z-10 -mb-px flex h-[30px] w-[74px] items-center justify-center rounded-t-[5px] border border-b-0 border-black bg-[#808080] pt-px"><T w={41}>World</T></div>
            <div className="flex h-[27px] w-[71px] items-center justify-center rounded-t-[4px] border border-l-0 border-black bg-[#6c6c6c] pt-[2px] pr-[3px]"><T w={39}>Insert</T></div>
            <div className="flex h-[27px] w-[73px] items-center justify-center rounded-t-[4px] border border-black bg-[#6c6c6c] pt-[2px] pr-px"><T w={44}>Layers</T></div>
          </div>
          <div className="-mt-px flex flex-1 flex-col rounded-[9px] rounded-tl-none border border-black bg-[#808080] px-[6px]">
            <div className="relative mt-[7px] h-[107px] shrink-0 overflow-hidden pl-[23px] leading-[17px]">
              {[["GUI", 24], ["Scene", 40], ["Spherical Coordinates", 148], ["Physics", 49], ["Atmosphere", 84], ["Wind", 35], ["Models", 46]].map(([t, w]) => (
                <div key={t} className="flex h-[17px] items-center"><T w={w}>{t}</T></div>
              ))}
              <svg className="absolute top-[103px] left-[9px]" width="6" height="6" viewBox="0 0 6 6"><path d="M1 0l4 4H1z" fill="#eee" /></svg>
              <div className="absolute top-[22px] right-0 h-[49px] w-[8px] rounded-full bg-[#515151]" />
            </div>
            <div className="mx-auto h-[3px] w-[17px] border-t-2 border-dotted border-[#b5b5b5]" />
            <div className="mt-[2px] flex h-[17px] w-[237px] shrink-0 items-center bg-[#404040] font-bold">
              <T w={65} className="mr-[35px]">Property</T>
              <T w={41}>Value</T>
            </div>
          </div>
        </div>
        <div className="flex w-[9px] shrink-0 items-center justify-center"><div className="h-[17px] border-l-2 border-dotted border-[#8a8a8a]" /></div>
        <div className="flex w-[497px] shrink-0 flex-col overflow-hidden rounded-[10px] border border-black bg-[#808080]">
          <GazeboToolbar />
          <Scene />
          <div className="flex flex-1 flex-col border-t border-black">
            <div className="mt-[11px] flex h-[20px] shrink-0 items-center pl-[11px]">
              <div className="flex w-[13px] shrink-0 justify-between"><span className="h-[17px] w-[5px] bg-[#d4d4d4]" /><span className="h-[17px] w-[5px] bg-[#d4d4d4]" /></div>
              <div className="mt-[9px] ml-[14px] h-[2px] w-[4px] bg-[#333]" />
              <T w={116} className="ml-[10px]">Real Time Factor:</T>
              <div className="ml-[7px] flex h-[19px] w-[90px] shrink-0 items-center rounded-[4px] bg-[#707070] pl-[2px] text-[#333]"><T w={28}>1.00</T></div>
              <T w={65} className="ml-[6px]">Sim Time:</T>
              <div className="ml-[7px] flex h-[19px] w-[110px] shrink-0 items-center overflow-hidden rounded-[4px] bg-[#707070] text-[#333]"><T w={107}>00 00:15:42.320</T></div>
              <T w={29} className="ml-[6px]">Real</T>
            </div>
            <div className="mt-[6px] ml-[25px] h-[8px] w-[204px] shrink-0 rounded-full bg-[#515151]" />
          </div>
        </div>
        <div className="flex w-[13px] shrink-0 items-center justify-center"><div className="h-[17px] border-l-2 border-dotted border-[#8a8a8a]" /></div>
      </div>
      <svg className="mt-[5px] mr-[9px] shrink-0 self-end" width="8" height="10" viewBox="0 0 8 10"><path d="M6 1h2M3 4h2M6 4h2M0 7h2M3 7h2M6 7h2" stroke="#999" strokeWidth="2" /></svg>
    </div>
  );
}

/* ---------- desktop ---------- */
function TopBar() {
  return (
    <div className="flex h-[27px] shrink-0 items-center bg-linear-to-b from-[#5a574e] to-[#403f3a] font-bold text-[#d5d1c9]">
      <T w={68} className="ml-[12px]">Activities</T>
      <div className="ml-[19px]"><GazeboLogo size={17} /></div>
      <T w={52} className="ml-[6px]">Gazebo</T>
      <Caret className="ml-[6px] w-[9px]" />
      <div className="ml-auto flex w-[955px] items-center">
        <T w={57}>Cc 22:47</T>
        <span className="ml-[4px] size-[8px] rounded-full bg-[#dfdbd2]" />
        <svg className="ml-[669px]" width="20" height="15" viewBox="0 0 20 15"><path d="M2 0h10q2 0 2 2v4l5-5v13l-5-5v4q0 2-2 2H2q-2 0-2-2V2Q0 0 2 0zM4 4.500v6h6v-6z" fillRule="evenodd" fill="#b5b2ab" /></svg>
        <T w={17} className="ml-[25px]">en</T>
        <Caret className="ml-[6px] w-[9px]" />
        <svg className="ml-[34px]" width="14" height="14" viewBox="0 0 14 14" fill="none" strokeWidth="1.800"><path d="M.5 4Q7-1.500 13.500 4" stroke="#8d8a83" /><path d="M2.500 6.500q4.500-3.500 9 0M4.500 9q2.500-2 5 0" stroke="#dfdbd2" /><circle cx="7" cy="12" r="1.800" fill="#dfdbd2" /></svg>
        <svg className="ml-[13px]" width="16" height="14" viewBox="0 0 16 14"><path d="M0 4.500h3L7 1v12L3 9.500H0z" fill="#dfdbd2" /><path d="M9 4.500q1.500 2.500 0 5M11 3q3 4 0 8M13 1q4.500 6 0 12" fill="none" stroke="#dfdbd2" strokeWidth="1.300" /></svg>
        <svg className="ml-[14px]" width="12" height="16" viewBox="0 0 12 16"><path d="M4 1h4v2h3v12H1V3h3z" fill="none" stroke="#dfdbd2" strokeWidth="1.800" /><path d="M3.500 12h5" stroke="#dfdbd2" strokeWidth="1.800" /></svg>
        <Caret className="ml-[12px] w-[9px]" />
      </div>
    </div>
  );
}

export default function App() {
  return (
    <div className="relative flex h-[1080px] w-[1920px] flex-col overflow-hidden bg-[#efebe7] font-['Noto_Sans',sans-serif] text-[14px] leading-[17px] text-black">
      <TopBar />
      <div className="flex h-[1053px]">
        <Dock />
        <div className="flex flex-1 flex-col">
          <div className="flex h-[28px] shrink-0 items-center bg-[#3c3b37] pb-px text-[#a8a59c]">
            <div className="w-[881px] shrink-0" />
            <T w={90} className="font-bold">Default - rqt</T>
            <div className="mr-[5px] ml-auto flex gap-[4px]">
              {["min", "max", "close"].map((k) => <WinBtn key={k} kind={k} cls="size-4 bg-[#5d5b56]" c="#3c3b37" />)}
            </div>
          </div>
          <div className="flex h-[22px] shrink-0 items-center border-b border-[#d5d1cd] pl-[10px]">
            <T w={25} className="mr-[14px]"><U>F</U>ile</T>
            <T w={50} className="mr-[14px]"><U>P</U>lugins</T>
            <T w={57} className="mr-[14px]"><U>R</U>unning</T>
            <T w={87} className="mr-[13px]">P<U>e</U>rspectives</T>
            <T w={32}><U>H</U>elp</T>
          </div>
          <div className="flex flex-1">
            <Reconfigure />
            <MatPlot />
          </div>
        </div>
      </div>
      <Gazebo />
    </div>
  );
}
